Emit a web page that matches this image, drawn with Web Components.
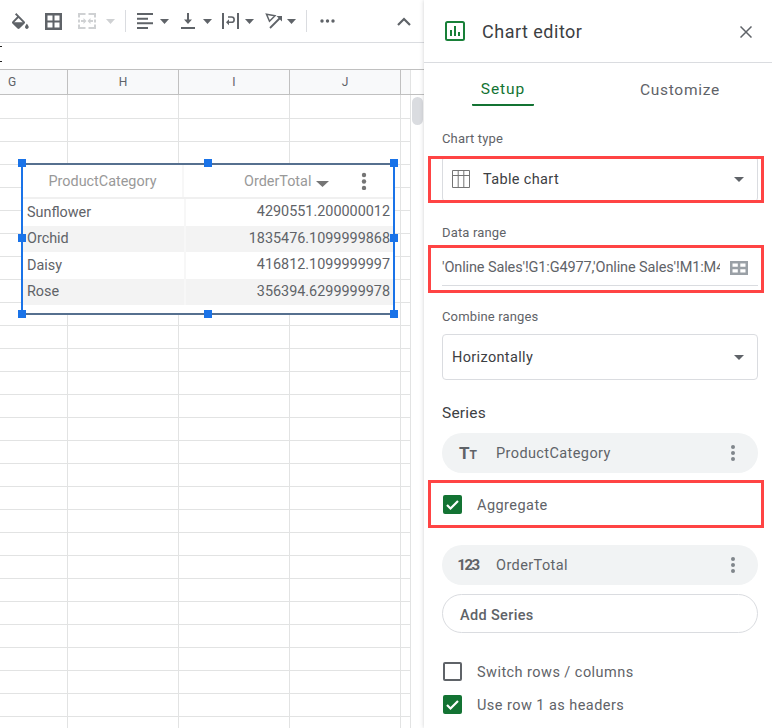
<!DOCTYPE html>
<html><head><meta charset="utf-8">
<style>
html,body{margin:0;padding:0;width:772px;height:728px;overflow:hidden;background:#fff;font-family:Roboto,"Liberation Sans",sans-serif}
</style></head><body>
<app-shell>
  <sheet-pane slot="left"></sheet-pane>
  <editor-panel slot="right"></editor-panel>
</app-shell>
<script>
function def(name,html){
  customElements.define(name,class extends HTMLElement{
    constructor(){super();this.attachShadow({mode:'open'}).innerHTML=typeof html==='function'?html(this):html;}
  });
}
def('app-shell',`<style>:host{display:flex;width:772px;height:728px;overflow:hidden}
::slotted([slot=left]){width:424px;flex:none}::slotted([slot=right]){width:348px;flex:none}</style>
<slot name="left"></slot><slot name="right"></slot>`);

const caret=(ml,c='#5f6368')=>`<svg class="c" style="margin-left:${ml}px" width="9" height="5" viewBox="0 0 9 5"><path d="M0 0h9L4.500 5z" fill="${c}"/></svg>`;
def('sheet-toolbar',`<style>:host{display:flex;align-items:center;height:42px;border-bottom:1px solid #dadce0;box-sizing:content-box;background:#fff;color:#5f6368}
svg{display:block;flex:none}.sep{width:1px;height:22px;background:#dadce0;flex:none}</style>
<svg style="margin-left:12px" width="17" height="16" viewBox="3 0 18.300 17"><path fill="#5f6368" d="M16.560 8.940 7.620 0 6.210 1.410l2.380 2.380-5.150 5.150c-.59.59-.59 1.540 0 2.120l5.500 5.500c.29.29.68.44 1.060.44s.77-.15 1.060-.44l5.500-5.500c.59-.58.59-1.530 0-2.120zM5.210 10 10 5.210 14.790 10z"/><path fill="#5f6368" d="M5 10h10l-5 5.500zM19 11.500s-2 2.170-2 3.500c0 1.100.9 2 2 2s2-.9 2-2c0-1.330-2-3.500-2-3.500z"/></svg>
<svg style="margin-left:16px" width="17" height="17" viewBox="0 0 17 17"><path fill="#5f6368" d="M0 0v17h17V0zm7.500 14.500H2.500V9.500h5zm0-7H2.500v-5h5zm7 7h-5V9.500h5zm0-7h-5v-5h5z"/></svg>
<svg style="margin-left:16px" width="18" height="16" viewBox="0 0 18 16"><g fill="#cfd1d3"><path d="M0 0h7.500v2H2v2.500H0zM10.500 0H18v4.500h-2V2h-5.500zM0 11.500h2V14h5.500v2H0zM16 11.500h2V16h-7.500v-2H16zM0 6.500h2v3H0zM16 6.500h2v3h-2z"/><path d="M3 7h2.500V5l3 3-3 3V9H3zM15 7h-2.500V5l-3 3 3 3V9H15z"/></g></svg>
${caret(10,'#cfd1d3')}
<div class="sep" style="margin-left:10px"></div>
<svg style="margin-left:11px" width="16" height="16" viewBox="0 0 16 16"><path fill="#5f6368" d="M0 0h16v2H0zM0 4.700h11v2H0zM0 9.300h16v2H0zM0 14h11v2H0z"/></svg>
${caret(7)}
<svg style="margin-left:12px" width="14" height="16" viewBox="0 0 14 16"><path fill="#5f6368" d="M6 0h2v6.500h3L7 11 3 6.500h3zM0 14h14v2H0z"/></svg>
${caret(8)}
<svg style="margin-left:10px" width="17" height="16" viewBox="0 0 17 16"><path fill="#5f6368" d="M0 0h2v16H0zM15 0h2v16h-2z"/><path fill="none" stroke="#5f6368" stroke-width="1.600" d="M6 4h3.500a2.600 2.600 0 0 1 0 5.300H6"/><path fill="#5f6368" d="M7 6.300v6L4 9.300z"/></svg>
${caret(6)}
<svg style="margin-left:11px" width="17" height="16" viewBox="0 0 17 16"><path fill="none" stroke="#5f6368" stroke-width="1.500" d="M1.500 1.200 10 2.800 4.500 8.300z"/><path fill="none" stroke="#5f6368" stroke-width="1.800" d="M5 15 15 5"/><path fill="#5f6368" d="M11.500 3H17v5.500z"/></svg>
${caret(5)}
<div class="sep" style="margin-left:10px"></div>
<svg style="margin-left:13px" width="15" height="4" viewBox="0 0 15 4"><g fill="#5f6368"><circle cx="2" cy="2" r="1.700"/><circle cx="7.500" cy="2" r="1.700"/><circle cx="13" cy="2" r="1.700"/></g></svg>
<svg style="margin-left:62px" width="14" height="9" viewBox="0 0 14 9"><path fill="none" stroke="#5f6368" stroke-width="2.200" d="M1 8l6-6 6 6"/></svg>`);

def('formula-bar',`<style>:host{display:flex;flex-direction:column;height:26px;padding-top:3px;box-sizing:border-box;gap:14px}
i{display:block;width:2px;height:1px;background:#222}</style><i></i><i></i>`);

def('column-head',`<style>:host{display:grid;grid-template-columns:68px 111px 111px 111px 10px 1fr;height:26px;box-sizing:border-box;border-top:1px solid #c0c0c0;border-bottom:1px solid #c0c0c0;background:#f8f9fa;font:12px Roboto,"Liberation Sans",sans-serif;color:#5f6368}
div{display:flex;align-items:center;justify-content:center;border-right:1px solid #c0c0c0;box-sizing:border-box}
.g{justify-content:flex-start;padding-left:8px}.e{border-right:1px solid #e2e3e3}.t{border:0;background:#fff}</style>
<div class="g">G</div><div>H</div><div>I</div><div>J</div><div class="e"></div><div class="t"></div>`);

def('chart-object',`<style>
:host{display:block;position:absolute;left:21px;top:68px;width:374px;height:152px;box-sizing:border-box;background:#fff;border:solid #1a73e8;border-width:0 2px;font:14.400px Roboto,"Liberation Sans",sans-serif;color:#5f6368}
.line{height:2px;background:#56708f}.b{position:absolute;left:0;right:0;bottom:0}
.h{position:absolute;width:8px;height:8px;background:#1a73e8}
.hd{display:grid;grid-template-columns:161px 1fr;height:32px;border-bottom:2px solid #f0f0f0;color:#999}
.hd>div{display:flex;align-items:center}.c1{justify-content:center;border-right:2px solid #f7f7f7}
.c2{padding-left:60px;position:relative}.c2 svg{display:block;margin-left:5px;margin-top:6px}
.keb{position:absolute;left:177px;top:7px;margin:0!important}
.r{display:grid;grid-template-columns:161px 1fr;height:26.500px;align-items:center}
.r:nth-child(even){background:#f3f3f3}.r b{font-weight:400;padding-left:4px}.r span{text-align:right;padding-right:3px;border-left:2px solid #f7f7f7;line-height:26.500px}
</style>
<div class="line"></div>
<div class="hd"><div class="c1">ProductCategory</div><div class="c2">OrderTotal<svg width="13" height="6" viewBox="0 0 13 6"><path d="M0 0h13L6.500 6z" fill="#757575"/></svg>
<svg class="keb" width="6" height="18" viewBox="0 0 6 18"><g fill="#757575"><circle cx="3" cy="3" r="2.200"/><circle cx="3" cy="9.500" r="2.200"/><circle cx="3" cy="16" r="2.200"/></g></svg></div></div>
<div class="rows">
<div class="r"><b>Sunflower</b><span>4290551.200000012</span></div>
<div class="r"><b>Orchid</b><span>1835476.1099999868</span></div>
<div class="r"><b>Daisy</b><span>416812.1099999997</span></div>
<div class="r"><b>Rose</b><span>356394.6299999978</span></div>
</div>
<div class="line b"></div>
${[[-5,-4],[181,-4],[367,-4],[-5,71],[367,71],[-5,147],[181,147],[367,147]].map(([x,y])=>`<div class="h" style="left:${x}px;top:${y}px"></div>`).join('')}`);

def('sheet-grid',`<style>:host{display:block;position:relative;height:633px;
background-color:#fff;
background-image:
 linear-gradient(to right,transparent 67px,#e2e3e3 67px,#e2e3e3 68px,transparent 68px,transparent 178px,#e2e3e3 178px,#e2e3e3 179px,transparent 179px,transparent 289px,#e2e3e3 289px,#e2e3e3 290px,transparent 290px,transparent 400px,#e2e3e3 400px,#e2e3e3 401px,transparent 401px,transparent 410px,#e2e3e3 410px,#e2e3e3 411px,transparent 411px),
 repeating-linear-gradient(to bottom,transparent 0,transparent 22px,#e2e3e3 22px,#e2e3e3 23px);
background-size:100% 100%,410px 100%;background-position:0 0,0 1px;background-repeat:no-repeat}
.thumb{position:absolute;left:412px;top:2px;width:11px;height:28px;border-radius:6px;background:#dadce0}
</style><slot></slot><div class="thumb"></div>`);

def('sheet-pane',`<style>:host{display:block;height:728px;overflow:hidden;position:relative;background:#fff}</style>
<sheet-toolbar></sheet-toolbar><formula-bar></formula-bar><column-head></column-head>
<sheet-grid><chart-object></chart-object></sheet-grid>`);

def('mark-box',`<style>:host{display:block;position:relative}
.f{position:absolute;left:-14px;right:-6px;top:var(--t,0);bottom:var(--b,0);border:3px solid #ff4444;box-sizing:border-box;pointer-events:none}</style><slot></slot><div class="f"></div>`);

def('field-label',`<style>:host{display:block;font:13px/16px Roboto,"Liberation Sans",sans-serif;color:#5f6368;letter-spacing:.15px}</style><slot></slot>`);

def('drop-select',`<style>:host{display:flex;align-items:center;height:46px;box-sizing:border-box;border:1px solid #dadce0;border-radius:4px;padding:0 13px 0 9px;font:14.500px Roboto,"Liberation Sans",sans-serif;color:#3c4043;letter-spacing:.35px}
.t{flex:1}svg{display:block;flex:none}</style><slot name="icon"></slot><span class="t"><slot></slot></span><svg width="10" height="5" viewBox="0 0 10 5"><path d="M0 0h10L5 5z" fill="#5f6368"/></svg>`);

def('range-input',`<style>:host{display:flex;align-items:center;height:36px;box-sizing:border-box;border-bottom:1px solid #dadce0;font:14.500px Roboto,"Liberation Sans",sans-serif;color:#5f6368;letter-spacing:-.12px}
.t{width:278px;overflow:hidden;white-space:nowrap}svg{display:block;margin-left:10px}</style><span class="t"><slot></slot></span>
<svg width="18" height="14" viewBox="0 0 18 14"><path fill="#9aa0a6" d="M0 0v14h18V0zm7.800 11.500H2.500V8.200h5.300zm0-5.700H2.500V2.500h5.300zm7.700 5.700h-5.200V8.200h5.200zm0-5.700h-5.200V2.500h5.200z"/></svg>`);

def('series-chip',`<style>:host{display:flex;align-items:center;height:40px;border-radius:20px;background:#f1f3f4;font:14.500px Roboto,"Liberation Sans",sans-serif;color:#5f6368;letter-spacing:.4px}
.i{width:54px;text-align:center;flex:none;font-weight:700;color:#5f6368;box-sizing:border-box}.t{flex:1}svg{display:block;margin-right:22px}</style>
<span class="i"><slot name="icon"></slot></span><span class="t"><slot></slot></span>
<svg width="6" height="16" viewBox="0 0 6 16"><g fill="#80868b"><circle cx="3" cy="2" r="2"/><circle cx="3" cy="8" r="2"/><circle cx="3" cy="14" r="2"/></g></svg>`);

def('check-row',(el)=>{const on=el.hasAttribute('checked');return `<style>:host{display:flex;align-items:center;height:33px;font:14.500px Roboto,"Liberation Sans",sans-serif;color:#5f6368;letter-spacing:.45px;padding-left:1px}
.b{width:19px;height:19px;box-sizing:border-box;border-radius:2px;margin-right:15px;flex:none;${on?'background:#137333':'border:2px solid #5f6368'}}svg{display:block}.l{padding-top:2px}</style>
<div class="b">${on?'<svg width="19" height="19" viewBox="0 0 19 19"><path d="M4 10l3.500 3.500L15 6" fill="none" stroke="#fff" stroke-width="2.200"/></svg>':''}</div><span class="l"><slot></slot></span>`});

def('editor-panel',`<style>
:host{display:block;height:728px;box-sizing:border-box;background:#fff;position:relative;box-shadow:0 0 4px rgba(60,64,67,.25);font-family:Roboto,"Liberation Sans",sans-serif}
.head{display:flex;align-items:center;height:62px;border-bottom:1px solid #dadce0;box-sizing:content-box;padding-left:21px}
.head h1{font:400 18px Roboto,"Liberation Sans",sans-serif;color:#3c4043;margin:0 0 0 17px;flex:1;letter-spacing:.5px}
.x{margin-right:20px;margin-top:2px}
.tabs{display:flex;height:43px;font:400 15.500px Roboto,"Liberation Sans",sans-serif;letter-spacing:.6px;color:#5f6368}
.tab{display:flex;align-items:center;height:43px;box-sizing:border-box;padding-top:10px}
.setup{margin-left:48px;width:62px;justify-content:center;color:#137333;border-bottom:2px solid #137333;border-radius:0 0 1px 1px;letter-spacing:.95px}
.cust{margin-left:106px;letter-spacing:.7px}
.body{padding:25px 14px 0 18px}
.gap23{margin-top:23px}
h2{font:400 15.500px/20px Roboto,"Liberation Sans",sans-serif;color:#3c4043;margin:23px 0 10px;letter-spacing:.2px}
.add{display:flex;align-items:center;height:39px;margin-top:9px;box-sizing:border-box;border:1px solid #dadce0;border-radius:20px;padding:3px 0 0 17px;font:500 14.500px Roboto,"Liberation Sans",sans-serif;color:#5f6368;letter-spacing:.35px}
.mt{margin-top:22px}
</style>
<div class="head">
<svg width="20" height="20" viewBox="0 0 20 20"><rect x="1" y="1" width="18" height="18" rx="1.500" fill="none" stroke="#188038" stroke-width="2"/><path fill="#188038" d="M5 9h2v6H5zM9 5h2v10H9zM13 11h2v4h-2z"/></svg>
<h1>Chart editor</h1>
<svg class="x" width="12" height="12" viewBox="0 0 12 12"><path d="M.5.500l11 11M11.500.5l-11 11" stroke="#5f6368" stroke-width="1.500" fill="none"/></svg>
</div>
<div class="tabs"><div class="tab setup">Setup</div><div class="tab cust">Customize</div></div>
<div class="body">
<field-label>Chart type</field-label>
<mark-box style="margin-top:9px;--b:-1px">
<drop-select><svg slot="icon" style="display:block;margin-right:13px" width="18" height="18" viewBox="0 0 18 18"><path fill="none" stroke="#757575" stroke-width="1" d="M.5.500h17v17H.5zM.5 5.500h17M6.200 .5v17M11.800 .5v17"/></svg>Table chart</drop-select>
</mark-box>
<field-label class="gap23">Data range</field-label>
<mark-box style="margin-top:9px;--t:-5px;--b:-7px">
<range-input>'Online Sales'!G1:G4977,'Online Sales'!M1:M4977</range-input>
</mark-box>
<field-label class="gap23">Combine ranges</field-label>
<drop-select style="margin-top:9px">Horizontally</drop-select>
<h2>Series</h2>
<series-chip><span slot="icon" style="font:700 17px Roboto,'Liberation Sans',sans-serif;letter-spacing:0;padding-right:2px">T<span style="font-size:12px">T</span></span>ProductCategory</series-chip>
<mark-box style="margin-top:7px"><check-row checked style="height:48px">Aggregate</check-row></mark-box>
<series-chip style="margin-top:17px"><span slot="icon" style="font:700 15px Roboto,'Liberation Sans',sans-serif;letter-spacing:-1.500px;padding-right:2px">123</span>OrderTotal</series-chip>
<div class="add">Add Series</div>
<check-row class="mt">Switch rows / columns</check-row>
<check-row checked>Use row 1 as headers</check-row>
</div>`);
</script>
</body></html>
